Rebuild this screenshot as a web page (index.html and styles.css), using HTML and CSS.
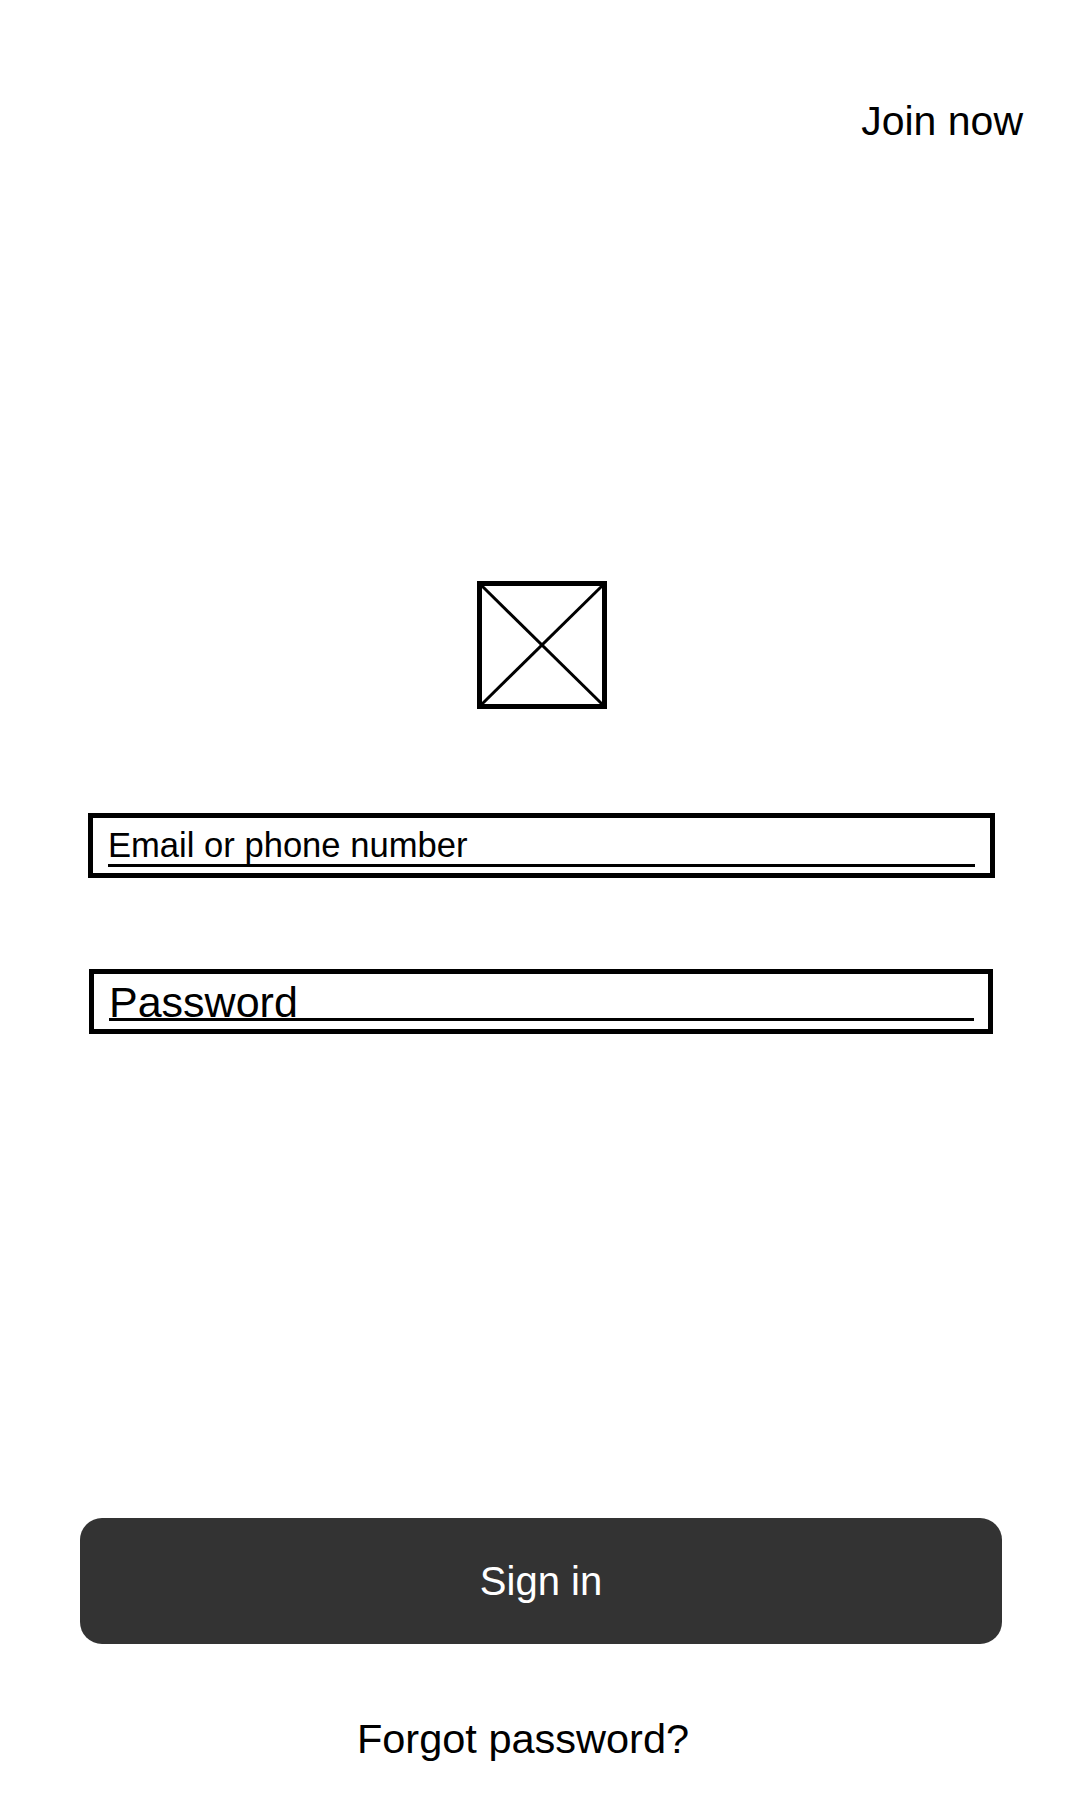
FILE: index.html
```html
<!DOCTYPE html>
<html lang="en">
<head>
<meta charset="utf-8">
<title>Sign in</title>
<link rel="stylesheet" href="styles.css">
</head>
<body>
<div class="screen">
  <header class="topbar">
    <a class="join" href="#">Join now</a>
  </header>

  <div class="logo">
    <svg width="130" height="128" viewBox="0 0 130 128" aria-hidden="true">
      <rect x="2.5" y="2.5" width="125" height="123" fill="none" stroke="#000" stroke-width="5"/>
      <line x1="4" y1="4" x2="126" y2="124" stroke="#000" stroke-width="3"/>
      <line x1="126" y1="4" x2="4" y2="124" stroke="#000" stroke-width="3"/>
    </svg>
  </div>

  <div class="field field-email">
    <div class="field-label">Email or phone number</div>
  </div>

  <div class="field field-password">
    <div class="field-label">Password</div>
  </div>

  <button class="signin" type="button">Sign in</button>

  <div class="forgot">
    <a href="#">Forgot password?</a>
  </div>
</div>
</body>
</html>
```

FILE: styles.css
```css
* {
  box-sizing: border-box;
}

html, body {
  margin: 0;
  padding: 0;
  background: #ffffff;
}

body {
  font-family: "Liberation Sans", Arial, sans-serif;
  color: #000000;
}

.screen {
  width: 1080px;
  height: 1800px;
  display: flex;
  flex-direction: column;
}

.topbar {
  display: flex;
  justify-content: flex-end;
  padding: 101px 57px 0 0;
}

.join {
  font-size: 41px;
  line-height: 40px;
  color: #000;
  text-decoration: none;
}

.logo {
  display: flex;
  justify-content: center;
  margin-top: 440px;
  padding-left: 3px;
}

.logo svg {
  display: block;
}

.field {
  border: 5px solid #000;
  height: 65px;
}

.field-label {
  border-bottom: 3px solid #000;
  white-space: nowrap;
}

.field-email {
  margin: 104px 0 0 88px;
  width: 907px;
  padding: 10px 15px 6px 15px;
}

.field-email .field-label {
  font-size: 34.6px;
  line-height: 34px;
  padding-bottom: 2px;
}

.field-password {
  margin: 91px 0 0 89px;
  width: 904px;
  padding: 12px 14px 8px 15px;
}

.field-password .field-label {
  font-size: 43px;
  line-height: 32px;
}

.signin {
  margin: 484px 0 0 80px;
  width: 922px;
  height: 126px;
  border: none;
  border-radius: 22px;
  background: #333333;
  color: #ffffff;
  font-family: "Liberation Sans", Arial, sans-serif;
  font-size: 40px;
  line-height: 40px;
  padding: 0;
  cursor: pointer;
}

.forgot {
  margin-top: 75px;
  padding-right: 34px;
  text-align: center;
  font-size: 41.5px;
  line-height: 40px;
}

.forgot a {
  color: #000;
  text-decoration: none;
}
```
